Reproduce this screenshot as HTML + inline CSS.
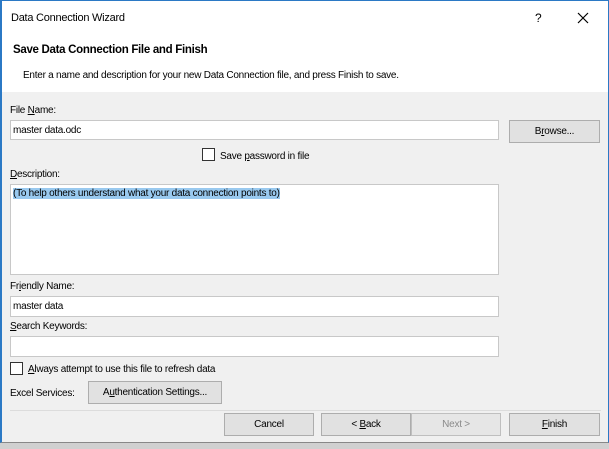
<!DOCTYPE html>
<html><head><style>
*{box-sizing:border-box;margin:0;padding:0}
body{width:609px;height:449px;overflow:hidden;background:#d0d0d0;font-family:"Liberation Sans",sans-serif;font-size:10px;letter-spacing:-0.25px;color:#000;position:relative}
.win{position:absolute;left:0;top:0;width:609px;height:443px;background:#f0f0f0;border-left:2px solid #2b79c5;border-right:1px solid #2b79c5;border-top:1px solid #2b79c5;border-bottom:1px solid #888}
.hdr{position:absolute;left:0;top:0;width:100%;height:91px;background:#fff}
.a{position:absolute;white-space:nowrap}
.in{position:absolute;background:#fff;border:1px solid #c8c8c8;padding:4px 2px;font-size:10px}
.btn{position:absolute;background:#e1e1e1;border:1px solid #adadad;text-align:center;line-height:21px;font-size:10px}
.cb{position:absolute;width:13px;height:13px;border:1px solid #333;background:#fff}
u{text-decoration:underline}
</style></head><body>
<div class="win">
<div class="hdr"></div>
<div class="a" style="left:9px;top:11px;font-size:11px">Data Connection Wizard</div>
<div class="a" style="left:533px;top:10px;font-size:12px">?</div>
<svg class="a" style="left:575px;top:11px" width="12" height="12"><path d="M1 1L11 11M11 1L1 11" stroke="#000" stroke-width="1.2"/></svg>
<div class="a" style="left:11px;top:43px;font-size:11.5px;font-weight:bold;letter-spacing:-0.3px">Save Data Connection File and Finish</div>
<div class="a" style="left:21px;top:69px">Enter a name and description for your new Data Connection file, and press Finish to save.</div>
<div class="a" style="left:8px;top:104px">File <u>N</u>ame:</div>
<div class="in" style="left:8px;top:119px;width:489px;height:20px">master data.odc</div>
<div class="btn" style="left:507px;top:119px;width:91px;height:23px">B<u>r</u>owse...</div>
<div class="cb" style="left:200px;top:147px"></div>
<div class="a" style="left:218px;top:150px">Save <u>p</u>assword in file</div>
<div class="a" style="left:8px;top:168px"><u>D</u>escription:</div>
<div class="in" style="left:8px;top:183px;width:489px;height:91px;padding-top:3px"><span style="background:#99c9ef">(To help others understand what your data connection points to)</span></div>
<div class="a" style="left:8px;top:280px">Fr<u>i</u>endly Name:</div>
<div class="in" style="left:8px;top:295px;width:489px;height:21px">master data</div>
<div class="a" style="left:8px;top:320px"><u>S</u>earch Keywords:</div>
<div class="in" style="left:8px;top:335px;width:489px;height:21px"></div>
<div class="cb" style="left:8px;top:361px"></div>
<div class="a" style="left:26px;top:363px"><u>A</u>lways attempt to use this file to refresh data</div>
<div class="a" style="left:8px;top:387px">Excel Services:</div>
<div class="btn" style="left:86px;top:380px;width:134px;height:23px">A<u>u</u>thentication Settings...</div>
<div class="a" style="left:8px;top:409px;width:591px;height:1px;background:#dcdcdc"></div>
<div class="btn" style="left:222px;top:412px;width:90px;height:23px">Cancel</div>
<div class="btn" style="left:319px;top:412px;width:90px;height:23px">&lt; <u>B</u>ack</div>
<div class="btn" style="left:409px;top:412px;width:90px;height:23px;color:#8a8a8a;border-color:#bfbfbf;background:#e6e6e6">Next &gt;</div>
<div class="btn" style="left:507px;top:412px;width:91px;height:23px"><u>F</u>inish</div>
</div>
</body></html>
